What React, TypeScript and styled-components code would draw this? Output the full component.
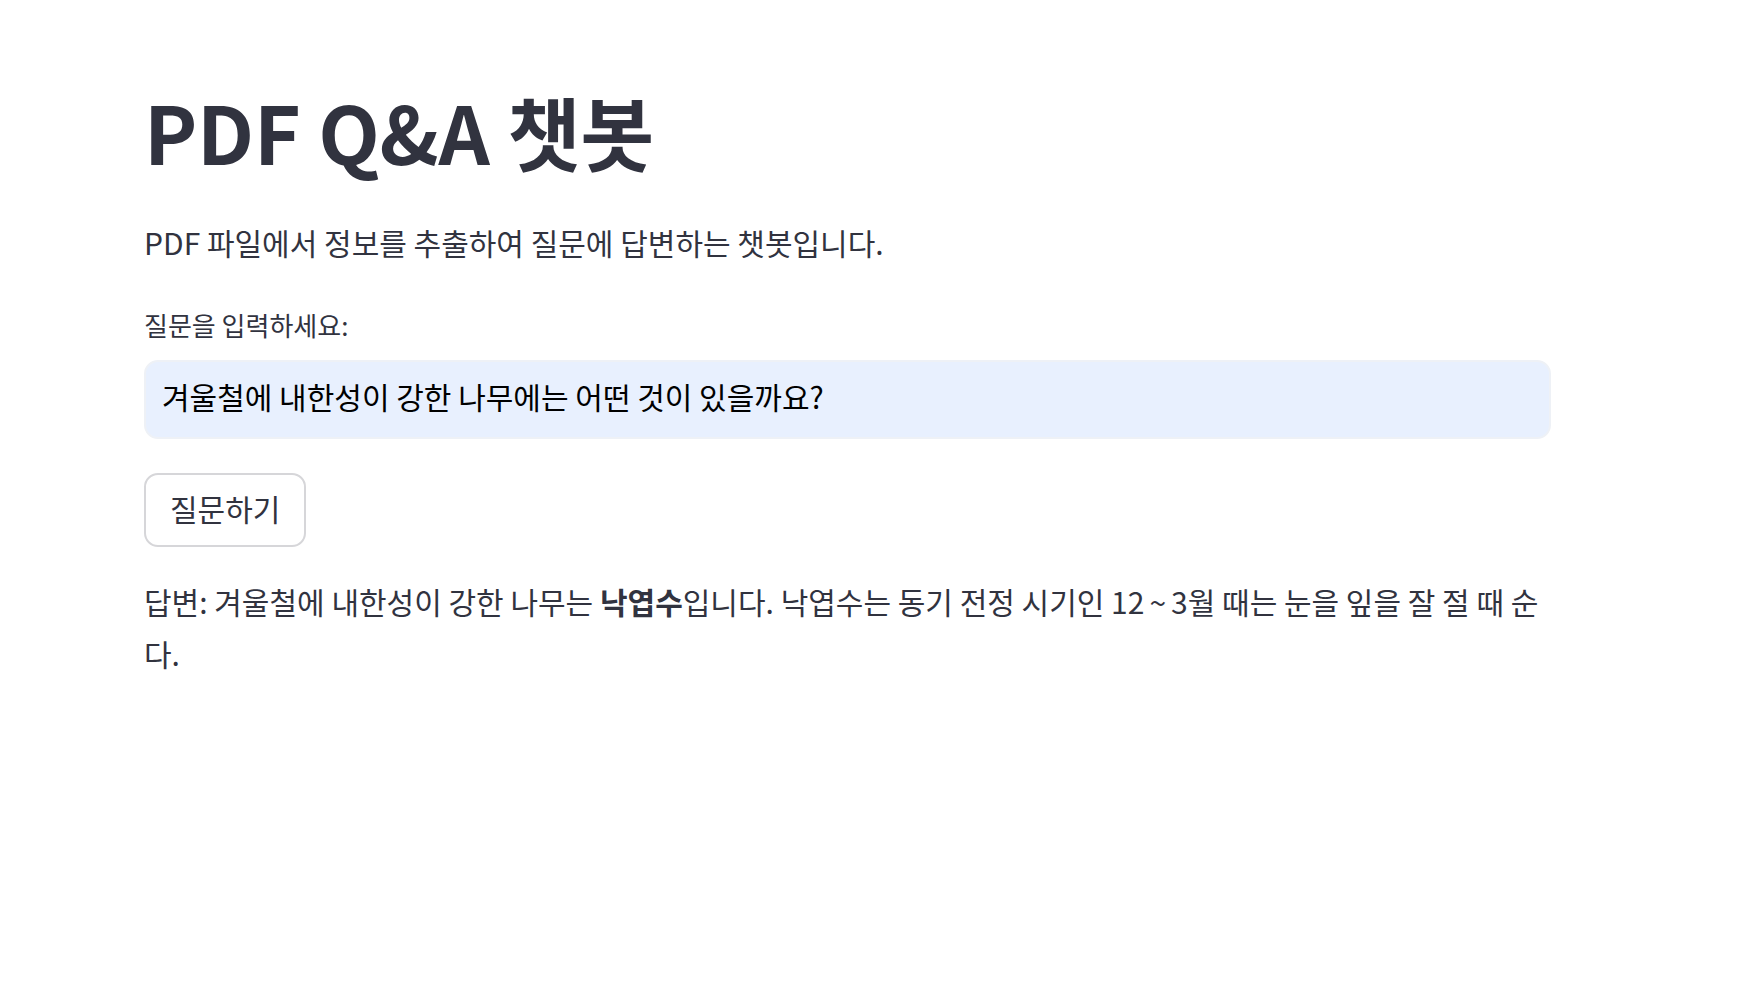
import React from "react";
import styled, { createGlobalStyle } from "styled-components";

const GlobalStyle = createGlobalStyle`
  html, body {
    margin: 0;
    padding: 0;
    background: #ffffff;
  }
  body {
    font-family: "Noto Sans CJK KR", "Noto Sans", sans-serif;
    color: #31333f;
    -webkit-font-smoothing: antialiased;
  }
  * { box-sizing: border-box; }
`;

const Page = styled.main`
  display: flex;
  flex-direction: column;
  width: 1407px;
  margin-left: 144px;
  padding-top: 83px;
`;

const Title = styled.h1`
  margin: 0;
  font-size: 80px;
  font-weight: 700;
  line-height: 94px;
  letter-spacing: -0.3px;
  color: #31333f;
`;

const Paragraph = styled.p<{ $top: number }>`
  margin: ${(p) => p.$top}px 0 0 0;
  font-size: 30px;
  font-weight: 400;
  line-height: 52px;
  color: #31333f;
`;

const Field = styled.div`
  display: flex;
  flex-direction: column;
  margin-top: 40px;
`;

const Label = styled.label`
  font-size: 26px;
  line-height: 34px;
  color: #31333f;
`;

const InputShell = styled.div`
  margin-top: 18px;
  height: 79px;
  border-radius: 14px;
  border: 2px solid #eef1f6;
  background: #e8f0fe;
  display: flex;
  align-items: center;
`;

const Input = styled.input`
  flex: 1;
  height: 100%;
  border: none;
  outline: none;
  background: transparent;
  padding: 0 0 7px 16px;
  font-family: "Noto Sans CJK KR", "Noto Sans", sans-serif;
  font-size: 30px;
  color: #000000;
`;

const Button = styled.button`
  align-self: flex-start;
  margin-top: 34px;
  height: 74px;
  padding: 0 24px 5px;
  border-radius: 14px;
  border: 2px solid #d6d6d9;
  background: #ffffff;
  font-family: "Noto Sans CJK KR", "Noto Sans", sans-serif;
  font-size: 30px;
  color: #31333f;
  cursor: pointer;
`;

const Strong = styled.strong`
  font-weight: 700;
`;

const Tilde = styled.span`
  margin: 0 5px;
`;

export default function App() {
  return (
    <>
      <GlobalStyle />
      <Page>
        <Title>PDF Q&amp;A 챗봇</Title>
        <Paragraph $top={39}>PDF 파일에서 정보를 추출하여 질문에 답변하는 챗봇입니다.</Paragraph>
        <Field>
          <Label htmlFor="q">질문을 입력하세요:</Label>
          <InputShell>
            <Input id="q" defaultValue="겨울철에 내한성이 강한 나무에는 어떤 것이 있을까요?" />
          </InputShell>
        </Field>
        <Button>질문하기</Button>
        <Paragraph $top={28}>
          답변: 겨울철에 내한성이 강한 나무는 <Strong>낙엽수</Strong>입니다. 낙엽수는 동기 전정 시기인 12<Tilde>~</Tilde>3월 때는 눈을 잎을 잘 절 때 순다.
        </Paragraph>
      </Page>
    </>
  );
}
